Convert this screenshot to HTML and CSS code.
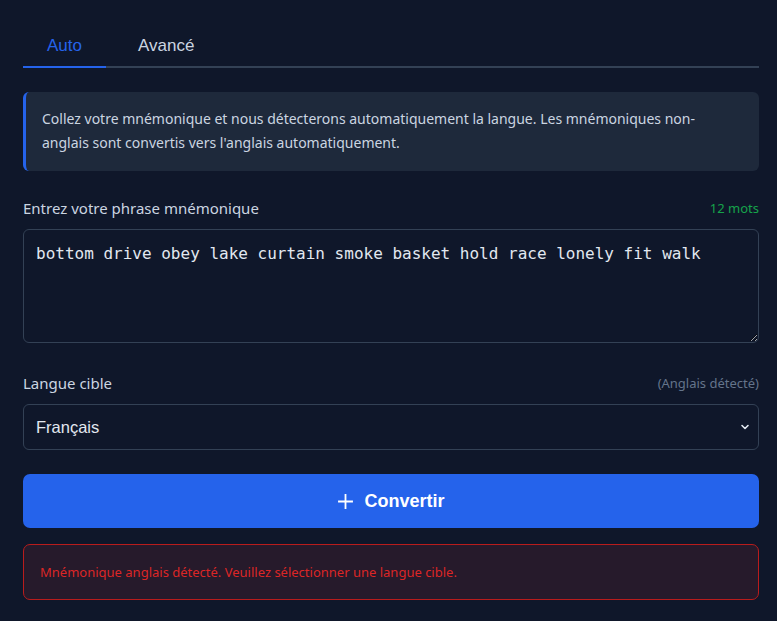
FILE: index.html
```html
<!DOCTYPE html>
<html lang="fr">
<head>
<meta charset="utf-8">
<link rel="stylesheet" href="styles.css">
</head>
<body>
<div class="page">
  <div class="tabs">
    <button class="tab active">Auto</button>
    <button class="tab">Avancé</button>
  </div>
  <div class="info">Collez votre mnémonique et nous détecterons automatiquement la langue. Les mnémoniques non-anglais sont convertis vers l'anglais automatiquement.</div>
  <div class="field field-phrase">
    <div class="label-row">
      <label class="label">Entrez votre phrase mnémonique</label>
      <span class="count">12 mots</span>
    </div>
    <textarea class="textarea" spellcheck="false">bottom drive obey lake curtain smoke basket hold race lonely fit walk</textarea>
  </div>
  <div class="field field-lang">
    <div class="label-row">
      <label class="label">Langue cible</label>
      <span class="hint">(Anglais détecté)</span>
    </div>
    <div class="select">
      <span>Français</span>
      <svg class="chev" width="10" height="10" viewBox="0 0 10 10"><path d="M2 3.5 L5 6.5 L8 3.5" fill="none" stroke="#e2e8f0" stroke-width="1.6" stroke-linecap="round" stroke-linejoin="round"/></svg>
    </div>
  </div>
  <button class="convert">
    <svg width="17" height="17" viewBox="0 0 16 16"><path d="M8 1 V15 M1 8 H15" stroke="#fff" stroke-width="1.7" fill="none"/></svg>
    <span>Convertir</span>
  </button>
  <div class="error">Mnémonique anglais détecté. Veuillez sélectionner une langue cible.</div>
</div>
</body>
</html>
```

FILE: styles.css
```css
* { box-sizing: border-box; }
html, body { margin: 0; padding: 0; background: #0f172a; }
body { font-family: "Noto Sans", "Open Sans", sans-serif; color: #cbd5e1; }
.page { padding: 23px 18px 0 23px; display: flex; flex-direction: column; }
.tabs { display: flex; gap: 8px; border-bottom: 2px solid #334155; height: 45px; }
.tab {
  background: none; border: none; padding: 2px 24px 0; margin-bottom: -2px;
  font-family: "Liberation Sans", Arial, sans-serif; font-size: 17px; color: #cbd5e1;
  border-bottom: 2px solid transparent; cursor: pointer;
}
.tab.active { color: #2563eb; border-bottom-color: #2563eb; }
.info {
  margin-top: 24px; background: #1e293b; border-left: 3px solid #2563eb; border-radius: 6px;
  padding: 15px 40px 16px 16px; font-size: 14px; line-height: 24px; color: #cbd5e1;
}
.field { display: flex; flex-direction: column; }
.field-phrase { margin-top: 25px; }
.field-lang { margin-top: 28px; }
.label-row { display: flex; justify-content: space-between; align-items: center; height: 24px; margin-bottom: 9px; }
.label { font-size: 15px; color: #cbd5e1; }
.count { font-size: 13px; color: #16a34a; }
.hint { font-size: 13px; color: #64748b; }
.textarea {
  height: 114px; background: #0f172a; border: 1px solid #334155; border-radius: 6px;
  color: #e2e8f0; font-family: "DejaVu Sans Mono", monospace; font-size: 16px; line-height: 24px;
  padding: 12px 12px; resize: vertical; outline: none;
}
.select {
  height: 46px; border: 1px solid #334155; border-radius: 6px; display: flex; align-items: center;
  justify-content: space-between; padding: 0 8px 0 12px;
  font-family: "Liberation Sans", Arial, sans-serif; font-size: 16.5px; color: #e2e8f0;
}
.convert {
  margin-top: 24px; height: 54px; background: #2563eb; border: none; border-radius: 7px;
  display: flex; align-items: center; justify-content: center; gap: 10px;
  color: #fff; font-family: "Liberation Sans", Arial, sans-serif; font-weight: bold; font-size: 18px;
}
.error {
  margin-top: 16px; border: 1px solid #b91c1c; background: #261a2b; border-radius: 7px;
  padding: 17px 16px; font-size: 13px; line-height: 20px; color: #dc2626;
}
```
